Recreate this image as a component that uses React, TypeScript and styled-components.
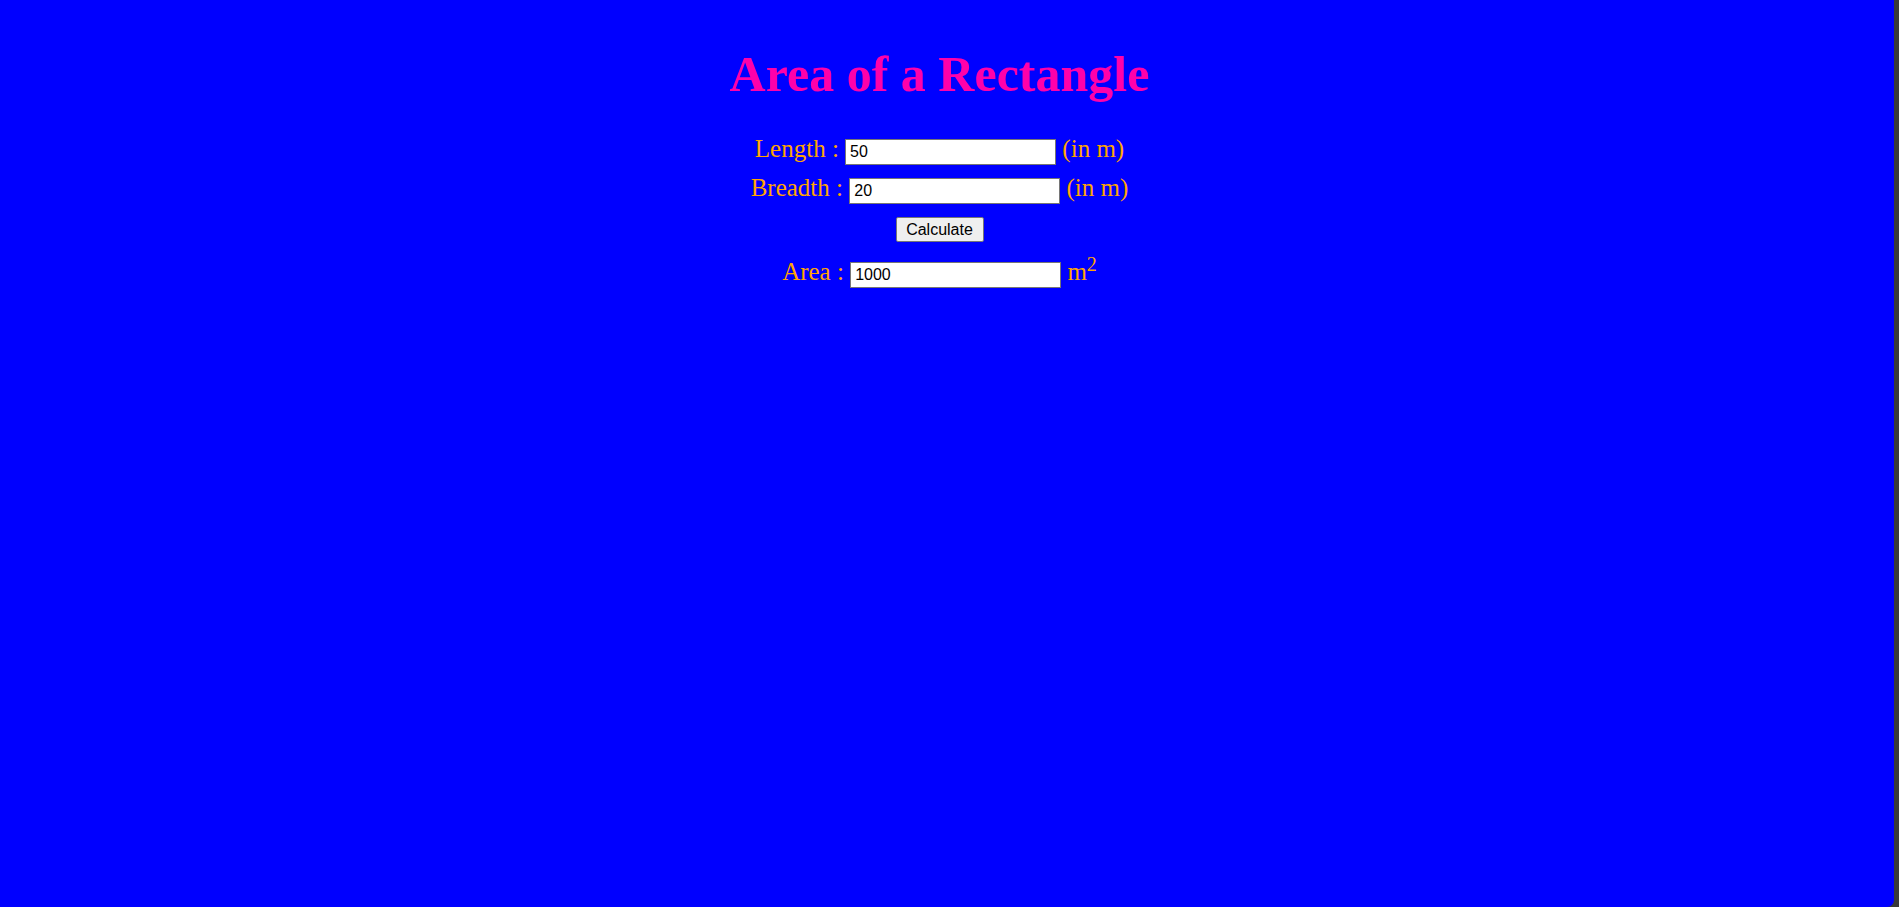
import React from "react";
import styled, { createGlobalStyle } from "styled-components";

const GlobalStyle = createGlobalStyle`
  html, body {
    margin: 0;
    padding: 0;
    background: #3a3a3a;
    overflow: hidden;
  }
  body {
    font-family: "Liberation Serif", "Times New Roman", serif;
  }
`;

const Page = styled.div`
  display: flex;
  flex-direction: row;
  width: 100vw;
  height: 100vh;
  background: #3a3a3a;
`;

const Main = styled.main`
  flex: 1;
  background: #0000ff;
  border-bottom-right-radius: 7px;
  display: flex;
  flex-direction: column;
  align-items: center;
  padding: 45px 23px 0 8px;
  box-sizing: border-box;
`;

const Strip = styled.div`
  width: 5px;
  flex-shrink: 0;
  background: #3a3a3a;
`;

const Title = styled.h1`
  margin: 0;
  font-family: "Liberation Serif", "Times New Roman", serif;
  font-size: 50px;
  font-weight: bold;
  color: #ff00aa;
  text-align: center;
`;

const Row = styled.div<{ $gap: number }>`
  margin-top: ${(p) => p.$gap}px;
  font-family: "Liberation Serif", "Times New Roman", serif;
  font-size: 25px;
  color: #ffa500;
  text-align: center;
  white-space: nowrap;
`;

const Field = styled.input`
  width: 211px;
  height: 26px;
  box-sizing: border-box;
  margin: 0;
  padding: 0 4px;
  border: 1px solid #767676;
  border-radius: 0;
  font-family: "Liberation Sans", Arial, sans-serif;
  font-size: 16px;
  color: #000;
  background: #fff;
  outline: none;
`;

const ButtonRow = styled.div`
  margin-top: 13px;
  display: flex;
  justify-content: center;
`;

const CalcButton = styled.button`
  width: 88px;
  height: 25px;
  padding: 0;
  margin: 0;
  border: 1px solid #767676;
  border-radius: 2px;
  background: #efefef;
  font-family: "Liberation Sans", Arial, sans-serif;
  font-size: 16px;
  color: #000;
`;

const Sup = styled.sup`
  font-size: 20px;
  line-height: 0;
`;

export default function App() {
  return (
    <>
      <GlobalStyle />
      <Page>
        <Main>
          <Title>Area of a Rectangle</Title>
          <Row $gap={32}>
            Length : <Field type="text" defaultValue="50" /> (in m)
          </Row>
          <Row $gap={9}>
            Breadth : <Field type="text" defaultValue="20" /> (in m)
          </Row>
          <ButtonRow>
            <CalcButton type="button">Calculate</CalcButton>
          </ButtonRow>
          <Row $gap={16}>
            Area : <Field type="text" defaultValue="1000" /> m<Sup>2</Sup>
          </Row>
        </Main>
        <Strip />
      </Page>
    </>
  );
}
